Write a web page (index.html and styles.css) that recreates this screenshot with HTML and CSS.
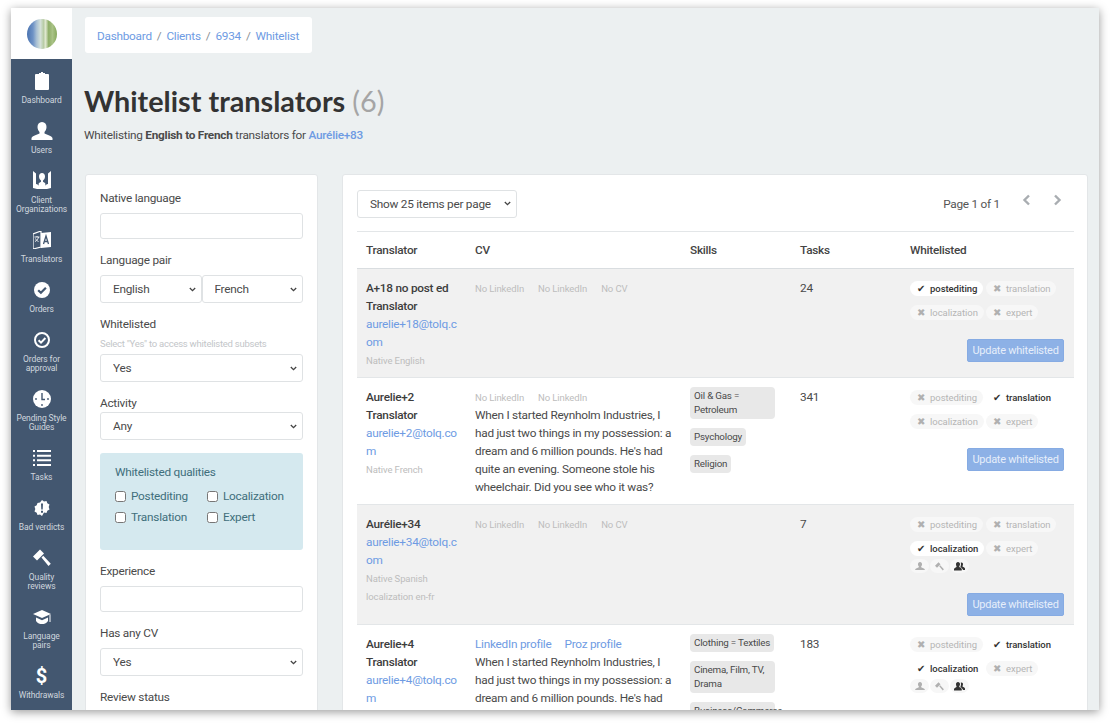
FILE: index.html
```html
<!DOCTYPE html>
<html>
<head>
  <title>Whitelist translators</title>
  <link rel="stylesheet" href="styles.css">
</head>
<body>
<div class="window">

  <nav class="sidebar">
    <div class="logo"><span class="logo-mark"></span></div>
    <a class="nav-item"><span class="nav-icon"><svg width="14" height="18" viewBox="0 0 14 18"><path d="M1 2h3V1h2V0h2v1h2v1h3a1 1 0 0 1 1 1v14a1 1 0 0 1-1 1H1a1 1 0 0 1-1-1V3a1 1 0 0 1 1-1z"/></svg></span>Dashboard</a>
    <a class="nav-item"><span class="nav-icon"><svg width="22" height="18" viewBox="0 0 22 18"><path d="M11 0c3 0 4.500 2.200 4.500 5 0 2.200-1 4-2 5v1.500c3 1.200 7 2.500 8 4.500v2H.5v-2c1-2 5-3.300 8-4.500V10c-1-1-2-2.800-2-5 0-2.800 1.500-5 4.500-5z"/></svg></span>Users</a>
    <a class="nav-item"><span class="nav-icon"><svg width="20" height="20" viewBox="0 0 20 20"><path d="M1 0l3 2.500V13c1.500 0 2.500 1 3 2-.5-1.500-.5-2.500 0-3l2-1.300V9.500C8 8.500 7 7.500 7 5.500 7 3.500 8.200 2 10 2s3 1.500 3 3.500c0 2-1 3-2 4v1.200l2 1.300c.5.500.5 1.500 0 3 .5-1 1.500-2 3-2V2.500L19 0v17l-4 1H5l-4-1z"/></svg></span>Client<br>Organizations</a>
    <a class="nav-item"><span class="nav-icon"><svg width="18" height="18" viewBox="0 0 18 18"><path d="M0 3l8-3v16l-8 2z" fill="none" stroke="#fff" stroke-width="1.200"/><path d="M8 2l10-1v15l-10 1z"/><path d="M1.500 6h5M4 5v1M5.500 6c-.4 2-1.500 3.500-3.500 4.500M2.500 7.500c.5 1.300 1.500 2.300 3 3" fill="none" stroke="#fff" stroke-width=".9"/><path d="M10.500 13l2.500-8 2.500 8M11.500 10.500h3" fill="none" stroke="#435770" stroke-width="1.300"/></svg></span>Translators</a>
    <a class="nav-item"><span class="nav-icon"><svg width="16" height="16" viewBox="0 0 16 16"><circle cx="8" cy="8" r="8"/><path d="M4.200 8.200l2.700 2.600 5-5" fill="none" stroke="#435770" stroke-width="2.200"/></svg></span>Orders</a>
    <a class="nav-item"><span class="nav-icon"><svg width="16" height="16" viewBox="0 0 16 16"><circle cx="8" cy="8" r="7" fill="none" stroke="#fff" stroke-width="2"/><path d="M4.600 8.200l2.400 2.400 4.400-4.600" fill="none" stroke="#fff" stroke-width="2"/></svg></span>Orders for<br>approval</a>
    <a class="nav-item"><span class="nav-icon"><svg width="18" height="18" viewBox="0 0 18 18"><circle cx="9" cy="9" r="9"/><path d="M9 3v6.500h3" fill="none" stroke="#435770" stroke-width="1.400"/><circle cx="3" cy="9" r=".9" fill="#435770"/><circle cx="15" cy="9" r=".9" fill="#435770"/><circle cx="9" cy="15" r=".9" fill="#435770"/></svg></span>Pending Style<br>Guides</a>
    <a class="nav-item"><span class="nav-icon"><svg width="18" height="16" viewBox="0 0 18 16"><path d="M0 0h2v2H0zM4 0h14v2H4zM0 4.700h2v2H0zM4 4.700h14v2H4zM0 9.300h2v2H0zM4 9.300h14v2H4zM0 14h2v2H0zM4 14h14v2H4z"/></svg></span>Tasks</a>
    <a class="nav-item"><span class="nav-icon"><svg width="16" height="16" viewBox="0 0 16 16"><path d="M8 0l2 1.500L12.500 1l.8 2.300 2.200 1.200-.8 2.500.8 2.500-2.200 1.200-.8 2.300-2.500-.5L8 16l-2-1.500-2.500.5-.8-2.300L.500 11.500 1.300 9 .500 6.500 2.700 5.300 3.500 3l2.500-.5z"/><path d="M7 3.500h2l-.3 6H7.300zM7 10.800h2v2H7z" fill="#435770"/></svg></span>Bad verdicts</a>
    <a class="nav-item"><span class="nav-icon"><svg width="18" height="18" viewBox="0 0 18 18"><path d="M0 7.500L7 .5 11 4.500 4 11.500zM8.500 8.500l1.800-1.800 7.500 8-2.300 2.300z"/></svg></span>Quality<br>reviews</a>
    <a class="nav-item"><span class="nav-icon"><svg width="18" height="15" viewBox="0 0 18 15"><path d="M9 0l9 4-9 4-9-4z"/><path d="M3 7.500l6 2.700 6-2.700v3.500c-1.500 2.500-4 3-6 3s-4.500-.5-6-3z"/><path d="M16.500 5v7h1V4.500z"/></svg></span>Language<br>pairs</a>
    <a class="nav-item"><span class="nav-icon nav-dollar">$</span>Withdrawals</a>
  </nav>

  <main class="main">
    <div class="crumbs">
      <a>Dashboard</a><span>/</span><a>Clients</a><span>/</span><a>6934</a><span>/</span><a>Whitelist</a>
    </div>

    <h1>Whitelist translators <small>(6)</small></h1>
    <p class="lead">Whitelisting <b>English to French</b> translators for <a>Aurélie+83</a></p>

    <div class="panels">
      <aside class="panel filters">
        <label class="first">Native language</label>
        <input class="field">

        <label>Language pair</label>
        <div class="pair">
          <select class="pick"><option>English</option></select>
          <select class="pick"><option>French</option></select>
        </div>

        <label>Whitelisted</label>
        <div class="help">Select "Yes" to access whitelisted subsets</div>
        <select class="pick"><option>Yes</option></select>

        <label class="tight">Activity</label>
        <select class="pick"><option>Any</option></select>

        <div class="qualities">
          <div class="qualities-title">Whitelisted qualities</div>
          <div class="checks">
            <span class="check"><input type="checkbox">Postediting</span>
            <span class="check"><input type="checkbox">Localization</span>
            <span class="check"><input type="checkbox">Translation</span>
            <span class="check"><input type="checkbox">Expert</span>
          </div>
        </div>

        <label>Experience</label>
        <input class="field">

        <label>Has any CV</label>
        <select class="pick"><option>Yes</option></select>

        <label>Review status</label>
        <select class="pick"><option>Any</option></select>
      </aside>

      <section class="panel results">
        <div class="toolbar">
          <select class="pick per-page"><option>Show 25 items per page</option></select>
          <div class="pager">
            <span>Page 1 of 1</span>
            <svg class="arrow" width="9" height="12" viewBox="0 0 9 12"><path d="M7 1.500L2.500 6 7 10.500" fill="none" stroke="#a9adb1" stroke-width="2.400"/></svg>
            <svg class="arrow" width="9" height="12" viewBox="0 0 9 12"><path d="M2 1.500L6.500 6 2 10.500" fill="none" stroke="#a9adb1" stroke-width="2.400"/></svg>
          </div>
        </div>

        <table class="list">
          <colgroup><col class="c1"><col class="c2"><col class="c3"><col class="c4"><col class="c5"></colgroup>
          <thead>
            <tr><th>Translator</th><th>CV</th><th>Skills</th><th>Tasks</th><th>Whitelisted</th></tr>
          </thead>
          <tbody>
            <tr class="odd">
              <td><b>A+18 no post ed Translator</b><a class="mail">aurelie+18@tolq.c<br>om</a><div class="note">Native English</div></td>
              <td><span class="none">No LinkedIn</span><span class="none">No LinkedIn</span><span class="none">No CV</span></td>
              <td></td>
              <td>24</td>
              <td>
                <div class="chips">
                  <span class="chip on"><i>✔</i>postediting</span><span class="chip"><i>✖</i>translation</span>
                  <span class="chip"><i>✖</i>localization</span><span class="chip"><i>✖</i>expert</span>
                </div>
                <div class="actions"><button>Update whitelisted</button></div>
              </td>
            </tr>
            <tr>
              <td><b>Aurelie+2 Translator</b><a class="mail">aurelie+2@tolq.co<br>m</a><div class="note">Native French</div></td>
              <td><span class="none">No LinkedIn</span><span class="none">No LinkedIn</span>
                <div class="bio">When I started Reynholm Industries, I had just two things in my possession: a dream and 6 million pounds. He's had quite an evening. Someone stole his wheelchair. Did you see who it was?</div></td>
              <td><span class="tag">Oil &amp; Gas = Petroleum</span><span class="tag">Psychology</span><span class="tag">Religion</span></td>
              <td>341</td>
              <td>
                <div class="chips">
                  <span class="chip"><i>✖</i>postediting</span><span class="chip on"><i>✔</i>translation</span>
                  <span class="chip"><i>✖</i>localization</span><span class="chip"><i>✖</i>expert</span>
                </div>
                <div class="actions"><button>Update whitelisted</button></div>
              </td>
            </tr>
            <tr class="odd">
              <td><b>Aurélie+34</b><a class="mail">aurelie+34@tolq.c<br>om</a><div class="note">Native Spanish</div><div class="note">localization en-fr</div></td>
              <td><span class="none">No LinkedIn</span><span class="none">No LinkedIn</span><span class="none">No CV</span></td>
              <td></td>
              <td>7</td>
              <td>
                <div class="chips">
                  <span class="chip"><i>✖</i>postediting</span><span class="chip"><i>✖</i>translation</span>
                  <span class="chip on"><i>✔</i>localization</span><span class="chip"><i>✖</i>expert</span>
                </div>
                <div class="minis">
                  <span class="mini"><svg width="10" height="10" viewBox="0 0 22 18"><path d="M11 0c3 0 4.500 2.200 4.500 5 0 2.200-1 4-2 5v1.500c3 1.200 7 2.500 8 4.500v2H.5v-2c1-2 5-3.300 8-4.500V10c-1-1-2-2.800-2-5 0-2.800 1.500-5 4.500-5z"/></svg></span>
                  <span class="mini"><svg width="9" height="9" viewBox="0 0 18 18"><path d="M0 7.500L7 .5 11 4.500 4 11.500zM8.500 8.500l1.800-1.800 7.500 8-2.300 2.300z"/></svg></span>
                  <span class="mini on"><svg width="11" height="10" viewBox="0 0 22 18"><path d="M8 1c2.500 0 4 2 4 4.500 0 2-1 3-1.500 4v1.500c2.500 1 4.500 2.500 5 4v3H0v-3c.5-1.500 2.500-3 5-4V9.500C4.500 8.500 4 7.500 4 5.500 4 3 5.500 1 8 1zM15 2c2 0 3 1.500 3 3.500 0 1.500-.5 2.500-1 3.300V10c2 1 4 2 5 4v3h-4c-.5-2-2.500-4-5-5.500V10c.5-1 1-2.500 1-4.500 0-1-.2-2-.5-2.800.4-.4 1-.7 1.500-.7z"/></svg></span>
                </div>
                <div class="actions wide"><button>Update whitelisted</button></div>
              </td>
            </tr>
            <tr>
              <td><b>Aurelie+4 Translator</b><a class="mail">aurelie+4@tolq.co<br>m</a><div class="note">Native French</div></td>
              <td><a class="profile">LinkedIn profile</a><a class="profile">Proz profile</a>
                <div class="bio">When I started Reynholm Industries, I had just two things in my possession: a dream and 6 million pounds. He's had quite an evening. Someone stole his wheelchair. Did you see who it was?</div></td>
              <td><span class="tag">Clothing = Textiles</span><span class="tag">Cinema, Film, TV, Drama</span><span class="tag">Business/Commerce</span></td>
              <td>183</td>
              <td>
                <div class="chips">
                  <span class="chip"><i>✖</i>postediting</span><span class="chip on"><i>✔</i>translation</span>
                  <span class="chip on"><i>✔</i>localization</span><span class="chip"><i>✖</i>expert</span>
                </div>
                <div class="minis">
                  <span class="mini"><svg width="10" height="10" viewBox="0 0 22 18"><path d="M11 0c3 0 4.500 2.200 4.500 5 0 2.200-1 4-2 5v1.500c3 1.200 7 2.500 8 4.500v2H.5v-2c1-2 5-3.300 8-4.500V10c-1-1-2-2.800-2-5 0-2.800 1.500-5 4.500-5z"/></svg></span>
                  <span class="mini"><svg width="9" height="9" viewBox="0 0 18 18"><path d="M0 7.500L7 .5 11 4.500 4 11.500zM8.500 8.500l1.800-1.800 7.500 8-2.300 2.300z"/></svg></span>
                  <span class="mini on"><svg width="11" height="10" viewBox="0 0 22 18"><path d="M8 1c2.500 0 4 2 4 4.500 0 2-1 3-1.500 4v1.500c2.500 1 4.500 2.500 5 4v3H0v-3c.5-1.500 2.500-3 5-4V9.500C4.500 8.500 4 7.500 4 5.500 4 3 5.500 1 8 1zM15 2c2 0 3 1.500 3 3.500 0 1.500-.5 2.500-1 3.300V10c2 1 4 2 5 4v3h-4c-.5-2-2.500-4-5-5.500V10c.5-1 1-2.500 1-4.500 0-1-.2-2-.5-2.800.4-.4 1-.7 1.500-.7z"/></svg></span>
                </div>
              </td>
            </tr>
          </tbody>
        </table>
      </section>
    </div>
  </main>

</div>
</body>
</html>
```

FILE: styles.css
```css
html, body {
  height: 100%;
  overflow: hidden;
}

body {
  margin: 0;
  padding: 8px 11px 0;
  box-sizing: border-box;
  background: #fff;
  font-family: "Roboto", "Lato", sans-serif;
  font-size: 11.800px;
  letter-spacing: -0.25px;
  line-height: 18px;
  color: #4a4a4a;
}

a {
  color: #6e9be3;
}

.window {
  display: flex;
  width: 1088px;
  height: 702px;
  overflow: hidden;
  background: #ecf0f1;
  box-shadow: 0 2px 9px rgba(0, 0, 0, 0.4);
}

/* sidebar */
.sidebar {
  flex: 0 0 61px;
  background: #435770;
  padding-bottom: 20px;
}

.logo {
  display: flex;
  align-items: center;
  justify-content: center;
  height: 51px;
  margin-bottom: 5px;
  background: #fff;
}

.logo-mark {
  width: 30px;
  height: 30px;
  border-radius: 50%;
  background: linear-gradient(90deg, #4a73b0 0, #6f93c6 20%, #a9c0d4 32%, #d4e0d8 45%, #b9cda6 55%, #e0e8d0 62%, #8fae68 72%, #a9c286 85%, #86a85c 100%);
}

.nav-item {
  display: block;
  padding-bottom: 9px;
  color: #cfd6de;
  font-size: 8.500px;
  line-height: 9px;
  letter-spacing: -0.1px;
  text-align: center;
}

.nav-icon {
  display: flex;
  align-items: center;
  justify-content: center;
  height: 24px;
  padding-top: 5px;
  margin-bottom: 3px;
}

.nav-icon svg {
  fill: #fff;
}

.nav-dollar {
  color: #fff;
  font-size: 20px;
  font-weight: 700;
}

/* main area */
.main {
  flex: 1;
  min-width: 0;
  padding: 9px 11px 0 13px;
}

.crumbs {
  display: inline-flex;
  box-sizing: border-box;
  gap: 5px;
  height: 36px;
  align-items: center;
  padding: 2px 13px 0 12px;
  background: #fff;
  border-radius: 3px;
  color: #8a8f94;
}

h1 {
  margin: 28px 0 0 -1px;
  font-family: "Lato", sans-serif;
  font-size: 28.800px;
  letter-spacing: 0;
  line-height: 40px;
  font-weight: 700;
  color: #333;
}

h1 small {
  font-size: 28.800px;
  font-weight: 400;
  color: #a5a5a5;
}

.lead {
  margin: 5px 0 0 -1px;
  color: #4a4a4a;
}

.lead a {
  font-weight: 500;
}

.panels {
  display: flex;
  gap: 24px;
  margin-top: 30px;
  align-items: stretch;
}

.panel {
  background: #fff;
  border: 1px solid #e3e6e8;
  border-radius: 3px;
}

/* filter column */
.filters {
  flex: 0 0 203px;
  min-width: 0;
  padding: 15px 14px 0;
}

.filters label {
  display: block;
  margin: 13px 0 7px;
  line-height: 16px;
}

.filters label.first {
  margin-top: 0;
}

.filters label.tight {
  margin-top: 13px;
  margin-bottom: 1px;
}

.field {
  display: block;
  box-sizing: border-box;
  width: 100%;
  height: 26px;
  border: 1px solid #dfe2e4;
  border-radius: 3px;
}

.pick {
  display: block;
  appearance: none;
  box-sizing: border-box;
  width: 100%;
  min-width: 0;
  height: 28px;
  padding: 0 16px 0 12px;
  border: 1px solid #dfe2e4;
  border-radius: 3px;
  background: #fff url("data:image/svg+xml,%3Csvg xmlns='http://www.w3.org/2000/svg' width='7' height='5' viewBox='0 0 7 5'%3E%3Cpath d='M.8 1l2.700 2.700L6.200 1' fill='none' stroke='%23444' stroke-width='1.300'/%3E%3C/svg%3E") no-repeat right 5px center;
  font: inherit;
  letter-spacing: inherit;
  color: #4a4a4a;
}

.pair {
  display: flex;
}

.help {
  margin: -2px 0 3px;
  font-size: 9.500px;
  line-height: 14px;
  color: #c3c6c9;
}

.qualities {
  height: 97px;
  box-sizing: border-box;
  margin: 13px 0 13px;
  padding: 10px 15px;
  background: #d5e9ef;
  border-radius: 3px;
  color: #3f6f7c;
}

.checks {
  display: grid;
  grid-template-columns: 92px 1fr;
  row-gap: 3px;
  margin-top: 6px;
}

.check {
  display: flex;
  align-items: center;
}

.check input {
  width: 11px;
  height: 11px;
  margin: 0 5px 0 0;
}

/* results */
.results {
  flex: 1;
  min-width: 0;
  padding: 14px 14px 0 14px;
}

.toolbar {
  display: flex;
  align-items: center;
  justify-content: space-between;
  height: 29px;
  margin-bottom: 13px;
}

.per-page {
  width: 160px;
  height: 28px;
}

.pager {
  display: flex;
  align-items: center;
  color: #555;
  margin-right: 11px;
}

.arrow {
  margin: -7px 0 0 22px;
}

.list {
  width: 717px;
  border-collapse: collapse;
  table-layout: fixed;
}

.c1 { width: 110px; }
.c2 { width: 215px; }
.c3 { width: 110px; }
.c4 { width: 110px; }
.c5 { width: 172px; }

.list th {
  height: 36px;
  padding: 0 8px;
  border-top: 1px solid #e3e6e8;
  border-bottom: 1px solid #d9dde0;
  text-align: left;
  font-weight: 500;
  color: #444;
}

.list td {
  padding: 10px 8px 8px;
  vertical-align: top;
  border-bottom: 1px solid #e3e6e8;
}

.list th:first-child,
.list td:first-child {
  padding-left: 9px;
  padding-right: 7px;
}

.list td:last-child {
  padding-right: 10px;
}

.odd td {
  background: #f1f1f1;
}

.list b {
  display: block;
  font-weight: 500;
  color: #3d3d3d;
}

.mail {
  display: block;
}

.note {
  margin-bottom: -2px;
  font-size: 9.500px;
  letter-spacing: -0.1px;
  line-height: 20px;
  color: #bdbdbd;
}

.none {
  margin-right: 14px;
  font-size: 9.500px;
  letter-spacing: -0.1px;
  line-height: 1;
  color: #bdbdbd;
}

.profile {
  margin-right: 13px;
}

.tag {
  display: block;
  box-sizing: border-box;
  width: fit-content;
  max-width: 85px;
  margin: -1px 0 10px;
  padding: 2px 4px;
  background: #e8e8e8;
  border-radius: 4px;
  font-size: 9.800px;
  letter-spacing: -0.2px;
  line-height: 14px;
}

.chips {
  display: grid;
  grid-template-columns: 70px max-content;
  column-gap: 6px;
  row-gap: 9px;
  padding-top: 2px;
  justify-items: start;
}

.chip {
  display: inline-flex;
  align-items: center;
  height: 15px;
  padding: 0 6px 0 7px;
  background: #f7f7f7;
  border-radius: 8px;
  font-size: 9.500px;
  letter-spacing: -0.05px;
  line-height: 15px;
  color: #b5b5b5;
}

.chip i {
  width: 13px;
  font-family: "DejaVu Sans", sans-serif;
  font-style: normal;
  font-size: 10px;
  color: #b0b0b0;
}

.chip.on {
  background: #fff;
  color: #333;
  font-weight: 500;
}

.chip.on i {
  color: #333;
}

.minis {
  display: flex;
  gap: 1px;
  margin-top: 3px;
}

.mini {
  display: flex;
  align-items: center;
  justify-content: center;
  width: 19px;
  height: 14px;
  background: #f7f7f7;
  border-radius: 7px;
  fill: #b0b0b0;
}

.mini.on {
  fill: #333;
}

.actions {
  display: flex;
  justify-content: flex-end;
  margin-top: 19px;
}

.actions.wide {
  margin-top: 20px;
}

button {
  width: 97px;
  height: 23px;
  padding: 0;
  background: #8db1e6;
  border: 1px solid #86abe3;
  border-radius: 2px;
  font: inherit;
  font-size: 11px;
  letter-spacing: inherit;
  white-space: nowrap;
  color: #e6eefa;
}
```
